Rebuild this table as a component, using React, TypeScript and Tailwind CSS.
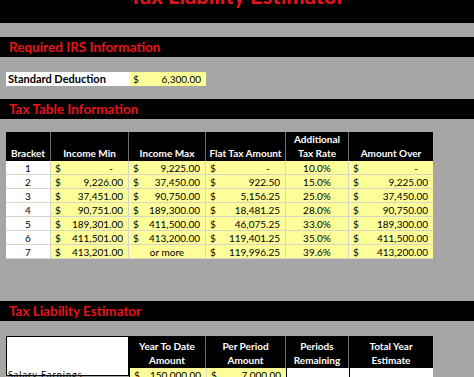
import React from "react"

type Row = {
  bracket: string
  min: string | null
  max: string | null
  flat: string | null
  rate: string
  over: string | null
}

const rows: Row[] = [
  { bracket: "1", min: null, max: "9,225.00", flat: null, rate: "10.0%", over: null },
  { bracket: "2", min: "9,226.00", max: "37,450.00", flat: "922.50", rate: "15.0%", over: "9,225.00" },
  { bracket: "3", min: "37,451.00", max: "90,750.00", flat: "5,156.25", rate: "25.0%", over: "37,450.00" },
  { bracket: "4", min: "90,751.00", max: "189,300.00", flat: "18,481.25", rate: "28.0%", over: "90,750.00" },
  { bracket: "5", min: "189,301.00", max: "411,500.00", flat: "46,075.25", rate: "33.0%", over: "189,300.00" },
  { bracket: "6", min: "411,501.00", max: "413,200.00", flat: "119,401.25", rate: "35.0%", over: "411,500.00" },
  { bracket: "7", min: "413,201.00", max: "or more", flat: "119,996.25", rate: "39.6%", over: "413,200.00" },
]

function Money({ value, className = "" }: { value: string | null; className?: string }) {
  if (value === "or more") {
    return <div className={`flex items-center justify-center ${className}`}>or more</div>
  }
  return (
    <div className={`flex items-center justify-between pl-[4px] ${value ? "pr-[5px]" : "pr-[15px]"} ${className}`}>
      <span>$</span>
      <span>{value ?? "-"}</span>
    </div>
  )
}

function SectionBar({ title }: { title: string }) {
  return (
    <div className="h-[20px] bg-black flex items-center pl-[9px] text-[13.5px] font-bold text-[#e8131b]">
      {title}
    </div>
  )
}

export default function App() {
  const cell = "h-[14px] border-b border-r border-[#d6d6c4]"
  const head = "flex flex-col items-center justify-end pb-[1px] leading-[14px] border-r border-[#6f6f6f]"

  return (
    <div className="w-[474px] h-[377px] overflow-hidden bg-[#a6a6a6] font-['Lato',sans-serif] text-[10px] text-black">
      {/* Titulo */}
      <div className="h-[23px] bg-black overflow-hidden flex justify-center">
        <div className="-mt-[15px] text-[22px] leading-none font-bold text-[#e8131b]">Tax Liability Estimator</div>
      </div>
      <div className="h-[14px]" />

      <SectionBar title="Required IRS Information" />
      <div className="pt-[15px] pb-[13px] pl-[6px]">
        <div className="flex h-[14px]">
          <div className="w-[123px] bg-white flex items-center pl-[2px] font-bold text-[11px]">Standard Deduction</div>
          <Money value="6,300.00" className="w-[77px] bg-[#ffff99]" />
        </div>
      </div>

      <SectionBar title="Tax Table Information" />
      <div className="h-[13px]" />

      {/* Tabla de tramos */}
      <div className="ml-[6px] w-[427px]">
        <div className="grid grid-cols-[45px_78px_77px_80px_63px_84px] h-[29px] bg-black text-white font-bold">
          <div className={head}>Bracket</div>
          <div className={head}>Income Min</div>
          <div className={head}>Income Max</div>
          <div className={head}>Flat Tax Amount</div>
          <div className={head}>
            <span>Additional</span>
            <span>Tax Rate</span>
          </div>
          <div className={`${head} border-r-0`}>Amount Over</div>
        </div>
        {rows.map((r) => (
          <div key={r.bracket} className="grid grid-cols-[45px_78px_77px_80px_63px_84px] leading-none">
            <div className={`${cell} bg-white flex items-center justify-center`}>{r.bracket}</div>
            <Money value={r.min} className={`${cell} bg-[#ffff99]`} />
            <Money value={r.max} className={`${cell} bg-[#ffff99]`} />
            <Money value={r.flat} className={`${cell} bg-[#ffff99]`} />
            <div className={`${cell} bg-[#ffff99] flex items-center justify-center`}>{r.rate}</div>
            <Money value={r.over} className={`${cell} bg-[#ffff99] border-r-0`} />
          </div>
        ))}
      </div>

      <div className="h-[42px]" />
      <SectionBar title="Tax Liability Estimator" />
      <div className="h-[15px]" />

      {/* Estimador */}
      <div className="ml-[6px] w-[427px] flex">
        <div className="w-[123px] h-[40px] bg-white border border-black flex items-end pl-[1px] tracking-[1px] text-[9px]">
          <span className="-mb-[6px]">Salary Earnings</span>
        </div>
        <div className="flex-1">
          <div className="grid grid-cols-[77px_80px_63px_84px] h-[32px] bg-black text-white font-bold">
            <div className={head}>
              <span>Year To Date</span>
              <span>Amount</span>
            </div>
            <div className={head}>
              <span>Per Period</span>
              <span>Amount</span>
            </div>
            <div className={head}>
              <span>Periods</span>
              <span>Remaining</span>
            </div>
            <div className={`${head} border-r-0`}>
              <span>Total Year</span>
              <span>Estimate</span>
            </div>
          </div>
          <div className="grid grid-cols-[77px_80px_63px_84px] leading-none">
            <Money value="150,000.00" className="h-[14px] bg-[#ffff99] border-l border-black" />
            <Money value="7,000.00" className="h-[14px] bg-[#ffff99] border-l border-[#d6d6c4]" />
            <div className="h-[14px] bg-white border-l border-black" />
            <div className="h-[14px] bg-white border-l border-black" />
          </div>
        </div>
      </div>
    </div>
  )
}
